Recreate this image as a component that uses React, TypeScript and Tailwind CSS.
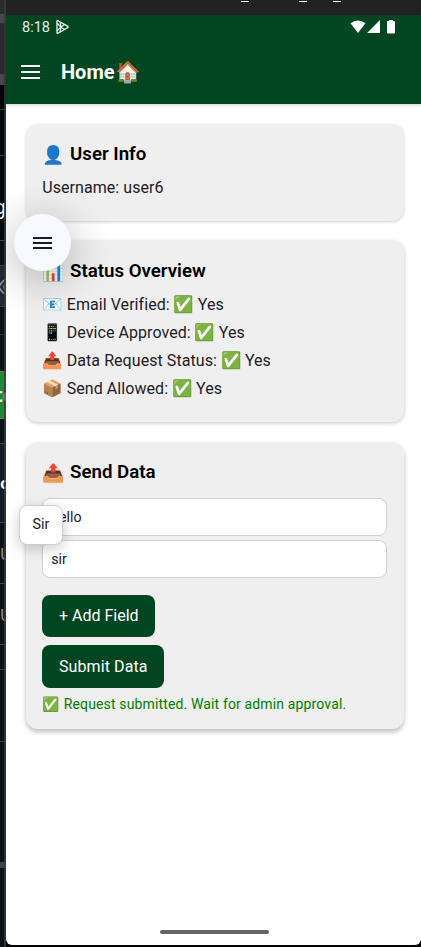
import type { ReactNode } from "react";

function Strip({ className, children }: { className: string; children?: ReactNode }) {
  return <div className={`relative shrink-0 overflow-hidden whitespace-nowrap ${className}`}>{children}</div>;
}

function BackgroundEdge() {
  return (
    <div className="flex h-full w-[6px] shrink-0 flex-col overflow-hidden bg-[#0d1117] font-['Noto_Sans',sans-serif]">
      <Strip className="h-[14px] bg-[#2b2b2b]" />
      <Strip className="h-[9px] bg-[#484848]" />
      <Strip className="h-[51px] bg-[#2b2b2b]" />
      <Strip className="h-[11px] bg-[#484848]" />
      <Strip className="h-[25px] border-b border-[#30363d] bg-[#010409]" />
      <Strip className="h-[46px] border-b border-[#30363d] bg-[#010409]" />
      <Strip className="h-[85px] border-b border-[#3d444d] bg-[#010409]">
        <span className="float-right mt-[37px] text-[20px] leading-[28px] text-white">g</span>
      </Strip>
      <Strip className="h-[25px] border-b border-[#3d444d] bg-[#0d1117]" />
      <Strip className="h-[41px] border-b border-[#3d444d] bg-[#212830]">
        <svg className="mt-[11px]" width="20" height="20" viewBox="0 0 20 20" fill="none" stroke="#9198a1" strokeWidth="1.5">
          <path d="M-1 10Q3 1.500 9 1.500M-1 10Q3 18 9 18" />
          <circle cx="7.500" cy="10" r="3.500" />
        </svg>
      </Strip>
      <Strip className="h-[28px] border-b border-[#30363d]" />
      <Strip className="h-[36px]" />
      <Strip className="h-[48px] border-y border-[#2ea043] bg-[#238636]">
        <span className="-ml-[6px] mt-[8px] block text-[20px] font-bold leading-[30px] text-white">tc</span>
      </Strip>
      <Strip className="h-[25px] border-b border-[#3d444d]" />
      <Strip className="h-[79px] border-b border-[#3d444d] bg-[#151b23]">
        <span className="mt-[28px] block text-[16px] font-bold leading-[22px] text-white">c</span>
      </Strip>
      <Strip className="h-[61px] border-b border-[#3d444d]">
        <span className="mt-[20px] block text-[16px] leading-[22px] text-[#9198a1]">U</span>
      </Strip>
      <Strip className="h-[61px] border-b border-[#3d444d]">
        <span className="mt-[20px] block text-[16px] leading-[22px] text-[#9198a1]">U</span>
      </Strip>
      <Strip className="h-[25px] border-b border-[#3d444d]" />
      <Strip className="h-[72px] border-b border-[#3d444d]" />
      <Strip className="h-[120px]" />
      <Strip className="h-[6px] bg-[#3d444d]" />
    </div>
  );
}

function Card({ className, title, icon, children }: { className: string; title: string; icon: string; children: ReactNode }) {
  return (
    <section className={`rounded-[12px] bg-[#efefef] px-[16.5px] pt-[18px] ${className}`}>
      <h2 className="flex h-[26px] items-center text-[18.7px] font-semibold text-black">
        <span className="ml-[0.5px] w-[27.25px] shrink-0 pb-px text-[18px]">{icon}</span>
        {title}
      </h2>
      {children}
    </section>
  );
}

function StatusRow({ icon, label }: { icon: string; label: string }) {
  return (
    <p className="flex h-[28.1px] items-center whitespace-nowrap tracking-[0.06px]">
      <span className="ml-[0.5px] w-[24px] shrink-0 text-[16.5px]">{icon}</span>
      {label}:
      <span className="ml-[4px] w-[24px] shrink-0 text-[16.5px]">✅</span>
      Yes
    </p>
  );
}

function MenuLines({ className }: { className: string }) {
  return (
    <span className={`flex w-[19px] flex-col ${className}`}>
      <i className="h-[2px] bg-current" />
      <i className="h-[2px] bg-current" />
      <i className="h-[2px] bg-current" />
    </span>
  );
}

export default function App() {
  return (
    <div className="relative flex h-[947px] w-[421px] overflow-hidden bg-black font-['Roboto','Noto_Color_Emoji',sans-serif] text-[#1c1b1f]">
      <BackgroundEdge />
      <div className="absolute left-[4px] top-0 h-full w-[2px] bg-[#3a3b3d]/80" />
      <div className="flex min-w-0 flex-1 flex-col">
        <div className="relative h-[15px] shrink-0 bg-[#212121]">
          <i className="absolute left-[235px] top-px h-px w-[8px] bg-white" />
          <i className="absolute left-[293px] top-px h-px w-[8px] bg-white" />
          <i className="absolute left-[327px] top-px h-px w-[8px] bg-white" />
        </div>
        <header className="z-10 h-[89px] shrink-0 bg-[#004621] text-white shadow-[0_1px_3px_rgba(0,0,0,0.2)]">
          <div className="flex h-[24px] items-center pl-[16px] pr-[25px]">
            <span className="pt-px text-[14.5px] text-white/90">8:18</span>
            <svg className="ml-[5px]" width="15" height="16" viewBox="0 0 15 16" fill="none" stroke="#f0f5f2" strokeWidth="1.3" strokeLinejoin="round" strokeLinecap="round">
              <path d="M2 2.300Q2 1.200 3 1.700L12.500 7.100Q13.700 8 12.500 8.700L3 14.300Q2 14.800 2 13.700Z" />
              <path d="M2.300 4.500L6 8L2.300 11.500M5 3L6 8L5 13M6 8L9.500 5.500M6 8L9.500 10.500" strokeWidth="1.100" />
            </svg>
            <svg className="ml-auto" width="46" height="16" viewBox="0 0 46 16" fill="#fff">
              <path d="M0.500 4.300Q8 -1.500 15.500 4.300L8 14Z" />
              <path d="M17 14L30 1V14Z" />
              <path d="M37 3Q37 2 38 2H39V1H43V2H44Q45 2 45 3V13.500Q45 14.500 44 14.500H38Q37 14.500 37 13.500Z" />
            </svg>
          </div>
          <div className="flex h-[65px] items-center pl-[15px]">
            <MenuLines className="gap-[4px]" />
            <h1 className="ml-[21px] flex items-center pt-px text-[20px] font-bold">
              Home<span className="ml-px text-[20.5px]">🏠</span>
            </h1>
          </div>
        </header>
        <main className="relative flex flex-1 flex-col gap-[20px] rounded-b-[6px] bg-white pl-[19.75px] pr-[17.25px] pt-[19.5px]">
          <Card className="h-[97px] shadow-[0_1px_3px_rgba(0,0,0,0.2)]" title="User Info" icon="👤">
            <p className="mt-[7px] text-[16px] leading-[26px] tracking-[0.06px]">Username: user6</p>
          </Card>
          <Card className="h-[181px] shadow-[0_1px_4px_rgba(0,0,0,0.24)]" title="Status Overview" icon="📊">
            <div className="mt-[6.5px] text-[16px]">
              <StatusRow icon="📧" label="Email Verified" />
              <StatusRow icon="📱" label="Device Approved" />
              <StatusRow icon="📤" label="Data Request Status" />
              <StatusRow icon="📦" label="Send Allowed" />
            </div>
          </Card>
          <Card className="h-[287px] shadow-[0_3px_5px_rgba(0,0,0,0.26)]" title="Send Data" icon="📤">
            <div className="mt-[12px] flex h-[38px] items-center rounded-[8px] border border-[#d0d0d0] bg-white px-[8px] pt-[2px] text-[14.2px]">hello</div>
            <div className="mt-[4px] flex h-[38px] items-center rounded-[8px] border border-[#d0d0d0] bg-white px-[8px] pt-[3px] text-[14.2px]">sir</div>
            <button className="mt-[17px] flex h-[42px] w-[113px] items-center justify-center rounded-[8px] bg-[#004621] pt-px text-[16px] text-white">+ Add Field</button>
            <button className="mt-[8px] flex h-[43px] w-[122px] items-center justify-center rounded-[8px] bg-[#004621] pt-px text-[16px] tracking-[0.1px] text-white">Submit Data</button>
            <p className="mt-[5.5px] flex h-[22px] items-center whitespace-nowrap text-[14px] tracking-[0.14px] text-[#008000]">
              <span className="ml-[0.5px] w-[21px] shrink-0">✅</span>Request submitted. Wait for admin approval.
            </p>
          </Card>
          <div className="absolute bottom-[11px] left-[154px] h-[4px] w-[109px] rounded-full bg-[#666]" />
        </main>
        <div className="h-[2px] shrink-0" />
      </div>
      <div className="absolute inset-y-0 left-[6px] right-0 z-20 overflow-hidden">
        <button className="absolute left-[8px] top-[214px] flex size-[57px] items-center justify-center rounded-full bg-[#f8f8ff] shadow-[0_8px_44px_rgba(0,0,0,0.3)]">
          <MenuLines className="gap-[3px]" />
        </button>
        <div className="absolute left-[13px] top-[505px] flex h-[40px] w-[44px] items-center justify-center rounded-[8px] border border-[#cccbd6] bg-white text-[14.4px] shadow-[0_4px_14px_rgba(0,0,0,0.2)]">Sir</div>
      </div>
    </div>
  );
}
